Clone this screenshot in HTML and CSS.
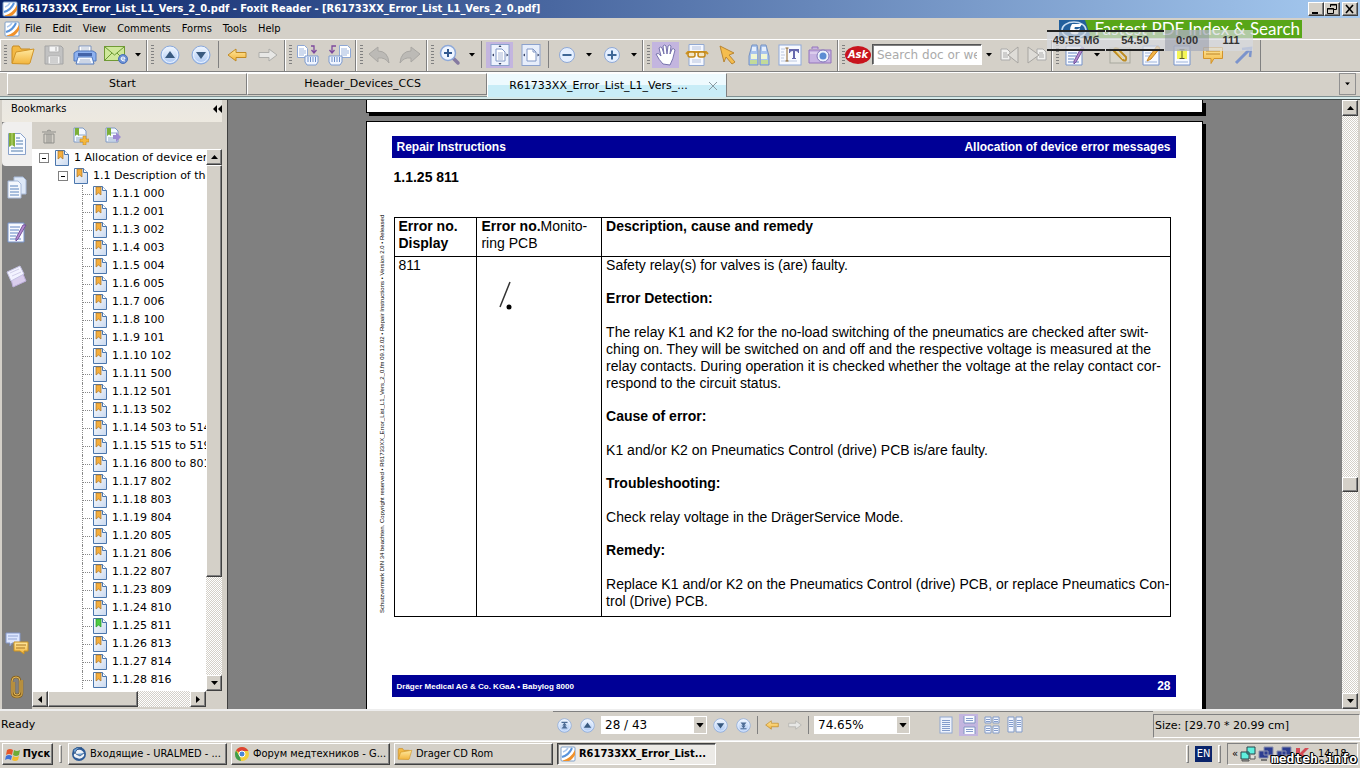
FILE: index.html
```
<!DOCTYPE html>
<html lang="en">
<head>
    <meta charset="UTF-8">
    <meta name="viewport" content="width=device-width, initial-scale=1.0">
    <title>R61733XX_Error_List_L1_Vers_2_0.pdf - Foxit Reader</title>
    <link rel="stylesheet" href="styles.css">
</head>
<body>
    <!-- shared icons -->
    <svg class="sprite" aria-hidden="true">
        <defs>
            <linearGradient id="gBall" x1="0" y1="0" x2="0" y2="1"><stop offset="0" stop-color="#f4f9ff"/><stop offset="1" stop-color="#a9c6f3"/></linearGradient>
            <linearGradient id="gGold" x1="0" y1="0" x2="0" y2="1"><stop offset="0" stop-color="#ffe9a0"/><stop offset="1" stop-color="#f2b43c"/></linearGradient>
            <linearGradient id="gPaper" x1="0" y1="0" x2="1" y2="1"><stop offset="0" stop-color="#ffffff"/><stop offset="1" stop-color="#c9d8ee"/></linearGradient>
        </defs>
        <symbol id="foxit" viewBox="0 0 16 16">
            <rect x="1" y="1" width="14" height="14" rx="1" fill="#fff" stroke="#7f9fc8"/>
            <path d="M3 6Q6 5 8 2" fill="none" stroke="#a9c6ee" stroke-width="1.500"/>
            <path d="M2 11Q9 9 12 2" fill="none" stroke="#5a94dc" stroke-width="2"/>
            <path d="M3 14.500Q11 12 15 4v5Q12 14 9 15H3z" fill="#f0912a"/>
        </symbol>
        <symbol id="caret" viewBox="0 0 6 4"><path d="M0 0h6L3 3.500z"/></symbol>
        <symbol id="folder" viewBox="0 0 26 22">
            <path d="M2 19V4l1-2h6l2 3h9v4" fill="#f3b944" stroke="#c88a20"/>
            <path d="M2 19.500L6 8l18-3-4 14q-.5 1-2 1z" fill="url(#gGold)" stroke="#d09428"/>
        </symbol>
        <symbol id="save" viewBox="0 0 22 22">
            <path d="M2 2h16l2 2v16H2z" fill="#c2c2c2" stroke="#a4a4a4"/>
            <path d="M6 2h10v6H6zM5 12h12v8H5z" fill="#f5f5f5" stroke="#b2b2b2"/>
            <path d="M13 3v4M7 14h8M7 16h8M7 18h8" stroke="#aaa"/>
        </symbol>
        <symbol id="printer" viewBox="0 0 26 22">
            <path d="M7 2h12v8H7z" fill="#fff" stroke="#7d93bd"/><path d="M9 4h8M9 6h8" stroke="#b4bfd2"/>
            <path d="M2 9l3-2h16l3 2v8H2z" fill="#8db1ef" stroke="#5079bd"/>
            <path d="M6 9h14v3H6z" fill="#4263a8"/><path d="M6 13h14l2 7H4z" fill="#f4f8ff" stroke="#5079bd"/>
            <path d="M8 16h10M7 18h12" stroke="#a4b2cc"/>
        </symbol>
        <symbol id="mail" viewBox="0 0 26 22">
            <rect x="1.500" y="2.500" width="20" height="14" fill="#cfe89b" stroke="#709a35"/>
            <path d="M2 3l9.500 8L21 3M2 16l7-7M21 16l-7-7" fill="none" stroke="#6b9933"/>
            <circle cx="20" cy="15" r="4.500" fill="#6b90d5" stroke="#4a70b8"/><path d="M18 15h4q0-2-2-2t-2 2q0 2 4 2" fill="none" stroke="#fff"/>
        </symbol>
        <symbol id="ball" viewBox="0 0 20 20"><circle cx="10" cy="10" r="9" fill="url(#gBall)" stroke="#88a8dc"/><circle cx="10" cy="10" r="7.500" fill="none" stroke="#e9f2ff"/></symbol>
        <symbol id="up" viewBox="0 0 20 20"><use href="#ball"/><path d="M10 6l5 7H5z" fill="#395a80"/></symbol>
        <symbol id="down" viewBox="0 0 20 20"><use href="#ball"/><path d="M10 14l5-7H5z" fill="#395a80"/></symbol>
        <symbol id="first" viewBox="0 0 20 20"><use href="#ball"/><path d="M6 5h8v1.500H6zM10 6l3 4H7zM10 9l4 5H6z" fill="#4d6c96"/></symbol>
        <symbol id="last" viewBox="0 0 20 20"><use href="#ball"/><path d="M6 13.500h8V15H6zM10 14l3-4H7zM10 11l4-5H6z" fill="#4d6c96"/></symbol>
        <symbol id="back" viewBox="0 0 20 16"><path d="M1 8l8-6v3.500h10v5H9V14z" fill="url(#gGold)" stroke="#c08a25"/></symbol>
        <symbol id="forward" viewBox="0 0 20 16"><path d="M19 8l-8-6v3.500H1v5h10V14z" fill="#e7e7e5" stroke="#adadaa"/></symbol>
        <symbol id="printdoc" viewBox="0 0 24 22">
            <path d="M1.500 1.500h7l3 3v9h-10z" fill="#fff" stroke="#8da7d5"/><path d="M3 5h5M3 7h7M3 9h7M3 11h5" stroke="#9db5de"/>
            <path d="M15 2h3v6m-2.500-2L18 9l2.500-3" fill="none" stroke="#7d4a9d" stroke-width="1.300"/>
            <path d="M9 12h13v6l-2 3h-9l-2-3z" fill="#f0f5ff" stroke="#7d9bcf"/><path d="M12 13v5M14.500 13v5M17 13v5M19.500 13v5" stroke="#6f8fc7"/>
        </symbol>
        <symbol id="printsel" viewBox="0 0 24 22">
            <path d="M12.500 1.500h8l3 3v9h-11z" fill="#fff" stroke="#8da7d5"/><path d="M14 5h6M14 7h8M14 9h8M14 11h6" stroke="#9db5de"/>
            <path d="M9 2H5v6M2.500 6L5 9l2.500-3" fill="none" stroke="#7d4a9d" stroke-width="1.300"/>
            <path d="M2 12h13v6l-2 3H4l-2-3z" fill="#f0f5ff" stroke="#7d9bcf"/><path d="M5 13v5M7.500 13v5M10 13v5M12.500 13v5" stroke="#6f8fc7"/>
        </symbol>
        <symbol id="undo" viewBox="0 0 24 20"><path d="M2 9l9-7v4q10 0 11 12-4-6-11-5v4z" fill="#bcbab6" stroke="#a9a7a3"/></symbol>
        <symbol id="redo" viewBox="0 0 24 20"><path d="M22 9l-9-7v4Q3 6 2 18q4-6 11-5v4z" fill="#bcbab6" stroke="#a9a7a3"/></symbol>
        <symbol id="zoom" viewBox="0 0 22 22">
            <path d="M14 14l5 5" stroke="#8579a0" stroke-width="3.500" stroke-linecap="round"/>
            <circle cx="9" cy="9" r="7.500" fill="#eff5ff" stroke="#8ea9d9" stroke-width="1.500"/><path d="M9 5v8M5 9h8" stroke="#31588f" stroke-width="2"/>
        </symbol>
        <symbol id="fitpage" viewBox="0 0 22 24">
            <rect x="2" y="1.500" width="18" height="21" fill="#eef3fd" stroke="#8ca2cd"/>
            <path d="M7 6h6l3 3v9H7z" fill="#fff" stroke="#7f95c4"/><path d="M9 10h5M9 12h5M9 14h5M9 16h5" stroke="#aab8d8"/>
            <path d="M9.500 4l1.500-2 1.500 2zM9.500 20l1.500 2 1.500-2zM5 10.500L3 12l2 1.500zM17.500 10.500l2 1.500-2 1.500z" fill="#333f63"/>
        </symbol>
        <symbol id="fitwidth" viewBox="0 0 22 24">
            <rect x="2" y="1.500" width="18" height="21" fill="#e7eefb" stroke="#8ca2cd"/>
            <path d="M7 6h6l3 3v9H7z" fill="#fff" stroke="#7f95c4"/><path d="M13 6v3h3" fill="none" stroke="#7f95c4"/>
            <path d="M5 10.500L3 12l2 1.500zM17.500 10.500l2 1.500-2 1.500z" fill="#333f63"/>
        </symbol>
        <symbol id="minus" viewBox="0 0 18 18"><circle cx="9" cy="9" r="7.500" fill="#e5efff" stroke="#8fa9d6"/><path d="M4.500 9h9" stroke="#3f6797" stroke-width="2"/></symbol>
        <symbol id="plus" viewBox="0 0 18 18"><circle cx="9" cy="9" r="7.500" fill="#e5efff" stroke="#8fa9d6"/><path d="M4.500 9h9M9 4.500v9" stroke="#3f6797" stroke-width="2"/></symbol>
        <symbol id="hand" viewBox="0 0 22 24">
            <path d="M8 21q-4-4-7-10 2-2 5 2L4 5q2-2 3 0l2 6-1-8q2-2 3 0l1 8 1-8q2-2 3 0l-1 8 2-5q2-1 3 1-2 10-5 15z" fill="#fff" stroke="#7773ad"/>
        </symbol>
        <symbol id="glasses" viewBox="0 0 24 24">
            <path d="M4 1.500h15v21H4z" fill="#f5f8ff" stroke="#92a9d2"/><path d="M7 4h9M7 6h9M7 17h9M7 19h9" stroke="#b7c3de"/>
            <path d="M1 11l2-2h18l2 2" fill="none" stroke="#cf9422" stroke-width="2"/><rect x="3" y="9" width="7" height="5" rx="2" fill="#f3e6c4" stroke="#c48818" stroke-width="1.500"/><rect x="13" y="9" width="7" height="5" rx="2" fill="#f3e6c4" stroke="#c48818" stroke-width="1.500"/>
        </symbol>
        <symbol id="arrow" viewBox="0 0 20 22"><path d="M2 2l14 7-5 2 6 7-3 2-6-7-2 5z" fill="#f5bd4d" stroke="#b98634"/></symbol>
        <symbol id="binoc" viewBox="0 0 24 24">
            <path d="M5 2h5l1 6v14H2V13zM19 2h-5l-1 6v14h9V13z" fill="#a9c4ee" stroke="#7793c2"/>
            <path d="M4 11h6v5H4zM14 11h6v5h-6z" fill="#f0f7d4"/><path d="M3 17h7v4H3zM14 17h7v4h-7z" fill="#c2da99"/><path d="M5 4h4v4H5zM15 4h4v4h-4z" fill="#e6effc"/>
        </symbol>
        <symbol id="textsel" viewBox="0 0 24 22">
            <rect x="1" y="1" width="22" height="20" fill="#f8faff" stroke="#8fa9d9"/>
            <path d="M3 5h4M3 8h3M3 11h4M3 14h3M3 17h16" stroke="#bcc8e0"/><path d="M9 4v13M7.500 4h3M7.500 17h3" stroke="#8d672e"/>
            <path d="M11 5h10v4h-1q0-2-3-2v7h1v1h-4v-1h1V7q-3 0-3 2h-1z" fill="#6567ad"/>
        </symbol>
        <symbol id="camera" viewBox="0 0 26 20">
            <path d="M4 4V2h6v2M1 5h22v13H1z" fill="#c8b4e2" stroke="#9474bc"/><path d="M2 8h20" stroke="#efe6f8"/>
            <circle cx="15" cy="11" r="6" fill="#eef3fc" stroke="#8478b9"/><circle cx="15" cy="11" r="3.500" fill="#5d8dd3"/>
        </symbol>
        <symbol id="prevhit" viewBox="0 0 22 20"><path d="M2 4h6l3 3v8H2z" fill="#f2f2f0" stroke="#aaa"/><path d="M4 8h4M4 10h5M4 12h5" stroke="#aaa"/><path d="M19 2v16L9 10z" fill="#dedcd7" stroke="#a7a5a1"/></symbol>
        <symbol id="nexthit" viewBox="0 0 22 20"><path d="M11 4h6l3 3v8h-9z" fill="#f2f2f0" stroke="#aaa"/><path d="M13 8h4M13 10h5M13 12h5" stroke="#aaa"/><path d="M2 2v16l11-8z" fill="#dedcd7" stroke="#a7a5a1"/></symbol>
        <symbol id="notepen" viewBox="0 0 22 24">
            <path d="M2 3h16v19H2z" fill="#f8faff" stroke="#7793ca"/><path d="M4 7h10M4 10h9M4 13h8M4 16h6M4 19h11" stroke="#94acd8" stroke-width="1.500"/>
            <path d="M20 5l-8 14-2 2v-3l7-13z" fill="#b38bd0" stroke="#76539c"/>
        </symbol>
        <symbol id="link" viewBox="0 0 22 20"><rect x="1" y="3" width="20" height="15" fill="#d8d5cb" stroke="#a7a79d"/><path d="M5 5l9 10q4 2 3-3L9 4Q5 2 5 6l8 8" fill="none" stroke="#bd8c22" stroke-width="2"/><path d="M6 5l8 9" stroke="#ffe58a"/></symbol>
        <symbol id="pencil" viewBox="0 0 22 24"><path d="M3 3h16v19H3z" fill="#f8faff" stroke="#7793ca"/><path d="M5 7h8M5 10h6M5 13h5M5 19h12" stroke="#9db3db"/><path d="M20 5l-9 11-4 2 2-4 8-11z" fill="#f4b547" stroke="#c28226"/></symbol>
        <symbol id="highlight" viewBox="0 0 22 24"><path d="M3 3h16v19H3z" fill="#f8faff" stroke="#7793ca"/><path d="M6 6h10v10H6z" fill="#f4f557"/><path d="M5 19h12" stroke="#9db3db"/><path d="M11 6v10M8.500 6.500h5M8.500 15.500h5" stroke="#5a5d2b"/></symbol>
        <symbol id="comment" viewBox="0 0 22 20"><path d="M1.500 2.500h19v11H12l-3 5v-5H1.500z" fill="url(#gGold)" stroke="#d2932b"/><path d="M4 6h14M4 9h14" stroke="#bc8429"/></symbol>
        <symbol id="draw" viewBox="0 0 22 22"><path d="M3 19L16 6" stroke="#7c94cc" stroke-width="3"/><path d="M9 5l9-1-1 9" fill="none" stroke="#7c94cc" stroke-width="2.500"/></symbol>
        <symbol id="trash" viewBox="0 0 16 16"><path d="M1 4h14M6 3q2-2 4 0M3 6h10v9H3zM6 6v9M8 6v9M10 6v9" fill="none" stroke="#8f8f8b"/></symbol>
        <symbol id="bmadd" viewBox="0 0 16 18"><path d="M1 1h9l3 3v11H1z" fill="#f4f8ff" stroke="#7e9ac5"/><path d="M6 8h6M3 11h8M3 13h8" stroke="#91abc9"/><path d="M2 1h4v8L4 7.500 2 9z" fill="#7caf39"/><path d="M10 9h3v3h3v3h-3v3h-3v-3H7v-3h3z" fill="#f4b83e" stroke="#c18319" stroke-width=".5"/></symbol>
        <symbol id="bmgo" viewBox="0 0 16 18"><path d="M1 1h9l3 3v11H1z" fill="#f4f8ff" stroke="#7e9ac5"/><path d="M6 6h5M3 11h8M3 13h8" stroke="#91abc9"/><path d="M2 1h4v8L4 7.500 2 9z" fill="#7caf39"/><path d="M8 8h3V5l5 5-5 5v-3H8z" fill="#9d8ad3"/></symbol>
        <symbol id="panebm" viewBox="0 0 20 24"><path d="M1.500 1.500h12l5 5v16h-17z" fill="#f7faff" stroke="#88a1ca"/><path d="M9 6h4M9 9h7M9 12h7M4 16h12M4 19h12" stroke="#89a7c9" stroke-width="1.500"/><path d="M2 1h6v14l-3-2-3 2z" fill="#83ad35"/><path d="M5 1v12" stroke="#bcdb78"/></symbol>
        <symbol id="pages" viewBox="0 0 20 24"><path d="M7 1h9l3 3v14H7z" fill="#dde8f8" stroke="#a8bad9"/><path d="M1 5h10l3 3v14H1z" fill="#f5f8fd" stroke="#a8bad9"/><path d="M3 10h8M3 13h9M3 16h9M3 19h9" stroke="#8faad2" stroke-width="1.500"/></symbol>
        <symbol id="layers" viewBox="0 0 22 24"><path d="M5 15l12-5 3 7-13 6z" fill="#d9cdec" stroke="#bdaedb"/><path d="M1 8l13-6 4 8-13 7z" fill="#f3f3ff" stroke="#c4c1e2"/><path d="M4 9l9-4M6 12l9-4" stroke="#d3d0ea"/></symbol>
        <symbol id="chat" viewBox="0 0 24 24"><path d="M1 2h14v10H7l-2 3v-3H1z" fill="#dce6ff" stroke="#8497c9"/><path d="M3 5h10M3 8h9" stroke="#93a5d4"/><path d="M9 11h14v9h-4v3l-4-3H9z" fill="url(#gGold)" stroke="#c99121"/><path d="M11 14h10M11 17h9" stroke="#aa7927"/></symbol>
        <symbol id="clip" viewBox="0 0 14 24"><path d="M4 7v10q0 3 3 3t3-3V6q0-4-4-4T2 6v12q0 4 5 4t5-4V5" fill="none" stroke="#8a6420" stroke-width="2.500"/><path d="M4 7v10q0 3 3 3t3-3V6q0-4-4-4T2 6v12q0 4 5 4t5-4V5" fill="none" stroke="#e2b95c"/></symbol>
        <symbol id="bm" viewBox="0 0 14 16"><path d="M.5.500h9l4 4v11H.5z" fill="url(#gPaper)" stroke="#4a76ad"/><path d="M9.500.500v4h4" fill="#fff" stroke="#4a76ad"/><path d="M3 1h5v8L5.500 7 3 9z" fill="#f5ae3d" stroke="#a8742a" stroke-width=".7"/></symbol>
        <symbol id="bmcur" viewBox="0 0 14 16"><path d="M.5.500h9l4 4v11H.5z" fill="url(#gPaper)" stroke="#4a76ad"/><path d="M9.500.500v4h4" fill="#fff" stroke="#4a76ad"/><path d="M3 1h5v8L5.500 7 3 9z" fill="#4ecb43" stroke="#27962b" stroke-width=".7"/></symbol>
        <symbol id="one" viewBox="0 0 16 18"><rect x="2" y="1" width="12" height="16" fill="#eef3fd" stroke="#92a8d0"/><path d="M4 4.500h8M4 6.500h8M4 8.500h8M4 10.500h8M4 12.500h8M4 14.500h8" stroke="#839ccb"/></symbol>
        <symbol id="cont" viewBox="0 0 16 18"><path d="M3 0v7h11V0M3 18v-7h11v7" fill="#f8faff" stroke="#8295c2"/><path d="M5 2.500h7M5 4.500h7M5 13.500h7M5 15.500h7" stroke="#839ccb"/></symbol>
        <symbol id="contface" viewBox="0 0 16 18"><path d="M1 1h6v6H1zM9 1h6v6H9zM1 10h6v7H1zM9 10h6v7H9z" fill="#f4f7ff" stroke="#829bc8"/><path d="M2 3.500h4M2 5.500h4M10 3.500h4M10 5.500h4M2 12.500h4M2 14.500h4M10 12.500h4M10 14.500h4" stroke="#839ccb"/></symbol>
        <symbol id="face" viewBox="0 0 16 18"><path d="M1 1h6v15H1zM9 1h6v15H9z" fill="#f4f7ff" stroke="#829bc8"/><path d="M2 4.500h4M2 6.500h4M2 8.500h4M2 10.500h4M10 4.500h4M10 6.500h4M10 8.500h4M10 10.500h4" stroke="#839ccb"/></symbol>
        <symbol id="pcs" viewBox="0 0 16 16"><path d="M7 1h8v7H7zM1 6h8v7H1z" fill="#5ff0df" stroke="#29454a"/><path d="M10 9v4h5v-3M2 14h7v1H2z" fill="#e2e2df" stroke="#555"/></symbol>
        <symbol id="net" viewBox="0 0 16 16"><path d="M6 1h9v8H6zM1 5h9v7H1z" fill="#2c3d91" stroke="#8b91ac"/><path d="M3 14h6" stroke="#777" stroke-width="2"/></symbol>
    </svg>

    <header class="titlebar">
        <svg width="16" height="16"><use href="#foxit"/></svg>
        <h1>R61733XX_Error_List_L1_Vers_2_0.pdf - Foxit Reader - [R61733XX_Error_List_L1_Vers_2_0.pdf]</h1>
        <div class="window-buttons">
            <button class="bevel" aria-label="Minimize"><svg width="10" height="10"><path d="M1 8h6v2H1z"/></svg></button>
            <button class="bevel" aria-label="Restore"><svg width="10" height="10"><path d="M3.500 3V.5h6v5H7M3 1h7M.5 4.500h6v5h-6zM0 5h7" fill="none" stroke="#000"/></svg></button>
            <button class="bevel close" aria-label="Close"><svg width="10" height="10"><path d="M1 1l7 8M8 1L1 9" stroke="#000" stroke-width="1.600"/></svg></button>
        </div>
    </header>

    <nav class="menubar">
        <svg width="16" height="16"><use href="#foxit"/></svg>
        <button>File</button>
        <button>Edit</button>
        <button>View</button>
        <button>Comments</button>
        <button>Forms</button>
        <button>Tools</button>
        <button>Help</button>
        <a class="banner" href="#">
            <svg width="32" height="18" viewBox="0 0 32 18"><path d="M0 0h26l6 18H0z" fill="#225f9c"/><ellipse cx="15" cy="10" rx="12" ry="8" fill="none" stroke="#c8ddf2" stroke-width="1.500"/><path d="M13 4h10l-2 3h-5q-2 3 3 2l2-1-2 6q-8 2-8-4 0-3 2-6z" fill="#fff"/></svg>
            <span>Fastest PDF Index &amp; Search</span>
        </a>
        <div class="monitor">
            <span class="lined">49.55 Мб</span><span class="lined">54.50</span><span class="time">0:00</span><span class="count">111</span>
        </div>
    </nav>

    <div class="toolbar">
        <div class="group">
            <button aria-label="Open"><svg width="26" height="22"><use href="#folder"/></svg></button>
            <button aria-label="Save"><svg width="22" height="22"><use href="#save"/></svg></button>
            <button aria-label="Print"><svg width="26" height="22"><use href="#printer"/></svg></button>
            <button aria-label="Email"><svg width="26" height="22"><use href="#mail"/></svg></button>
            <button class="drop" aria-label="Email options"><svg width="6" height="4"><use href="#caret"/></svg></button>
        </div>
        <div class="group">
            <button aria-label="Previous page"><svg width="20" height="20"><use href="#up"/></svg></button>
            <button aria-label="Next page"><svg width="20" height="20"><use href="#down"/></svg></button>
            <i class="sep"></i>
            <button aria-label="Previous view"><svg width="20" height="16"><use href="#back"/></svg></button>
            <button aria-label="Next view"><svg width="20" height="16"><use href="#forward"/></svg></button>
        </div>
        <div class="group">
            <button aria-label="Print document"><svg width="24" height="22"><use href="#printdoc"/></svg></button>
            <button aria-label="Print page"><svg width="24" height="22"><use href="#printsel"/></svg></button>
        </div>
        <div class="group">
            <button aria-label="Undo"><svg width="24" height="20"><use href="#undo"/></svg></button>
            <button aria-label="Redo"><svg width="24" height="20"><use href="#redo"/></svg></button>
        </div>
        <div class="group">
            <button aria-label="Zoom"><svg width="22" height="22"><use href="#zoom"/></svg></button>
            <button class="drop" aria-label="Zoom options"><svg width="6" height="4"><use href="#caret"/></svg></button>
            <i class="sep"></i>
            <button class="pressed" aria-label="Fit page"><svg width="22" height="24"><use href="#fitpage"/></svg></button>
            <button aria-label="Fit width"><svg width="22" height="24"><use href="#fitwidth"/></svg></button>
            <i class="sep"></i>
            <button aria-label="Zoom out"><svg width="18" height="18"><use href="#minus"/></svg></button>
            <button class="drop" aria-label="Zoom out options"><svg width="6" height="4"><use href="#caret"/></svg></button>
            <button aria-label="Zoom in"><svg width="18" height="18"><use href="#plus"/></svg></button>
            <button class="drop" aria-label="Zoom in options"><svg width="6" height="4"><use href="#caret"/></svg></button>
        </div>
        <div class="group">
            <button class="pressed" aria-label="Hand"><svg width="22" height="24"><use href="#hand"/></svg></button>
            <button aria-label="Reading mode"><svg width="24" height="24"><use href="#glasses"/></svg></button>
            <button aria-label="Select annotation"><svg width="20" height="22"><use href="#arrow"/></svg></button>
            <button aria-label="Find"><svg width="24" height="24"><use href="#binoc"/></svg></button>
            <button aria-label="Select text"><svg width="24" height="22"><use href="#textsel"/></svg></button>
            <button aria-label="Snapshot"><svg width="26" height="20"><use href="#camera"/></svg></button>
        </div>
        <div class="group search">
            <span class="ask">Ask</span>
            <input type="text" aria-label="Search document or web" placeholder="Search doc or web">
            <button class="drop" aria-label="Search options"><svg width="6" height="4"><use href="#caret"/></svg></button>
            <button class="small" aria-label="Previous hit"><svg width="22" height="20"><use href="#prevhit"/></svg></button>
            <button class="small" aria-label="Next hit"><svg width="22" height="20"><use href="#nexthit"/></svg></button>
        </div>
        <div class="group">
            <button aria-label="Note"><svg width="22" height="24"><use href="#notepen"/></svg></button>
            <button class="drop" aria-label="Note options"><svg width="6" height="4"><use href="#caret"/></svg></button>
            <button aria-label="Link"><svg width="22" height="20"><use href="#link"/></svg></button>
            <button aria-label="Pencil"><svg width="22" height="24"><use href="#pencil"/></svg></button>
            <button aria-label="Highlight"><svg width="22" height="24"><use href="#highlight"/></svg></button>
            <button aria-label="Comment"><svg width="22" height="20"><use href="#comment"/></svg></button>
            <button aria-label="Arrow"><svg width="22" height="22"><use href="#draw"/></svg></button>
        </div>
    </div>

    <div class="tabs">
        <button class="tab">Start</button>
        <button class="tab">Header_Devices_CCS</button>
        <button class="tab active"><span>R61733XX_Error_List_L1_Vers_...</span><svg width="8" height="8"><path d="M0 0l8 8M8 0L0 8" stroke="#8a9ba3"/></svg></button>
        <button class="tab-list" aria-label="List tabs"><svg width="5" height="4" viewBox="0 0 6 4"><use href="#caret"/></svg></button>
    </div>

    <main>
        <aside>
            <div class="pane-title">
                <h2>Bookmarks</h2>
                <button aria-label="Collapse"><svg width="9" height="8"><path d="M4 0v8L0 4zM9 0v8L5 4z"/></svg></button>
            </div>
            <div class="pane">
                <div class="pane-tabs">
                    <button class="current" aria-label="Bookmarks"><svg width="20" height="24"><use href="#panebm"/></svg></button>
                    <button aria-label="Pages"><svg width="20" height="24"><use href="#pages"/></svg></button>
                    <button aria-label="Annotations"><svg width="22" height="24"><use href="#notepen"/></svg></button>
                    <button aria-label="Layers"><svg width="22" height="24"><use href="#layers"/></svg></button>
                    <button class="bottom" aria-label="Comments"><svg width="24" height="24"><use href="#chat"/></svg></button>
                    <button aria-label="Attachments"><svg width="14" height="24"><use href="#clip"/></svg></button>
                </div>
                <div class="pane-body">
                    <div class="pane-tools">
                        <button aria-label="Delete"><svg width="16" height="16"><use href="#trash"/></svg></button>
                        <button aria-label="Add bookmark"><svg width="16" height="18"><use href="#bmadd"/></svg></button>
                        <button aria-label="Go to bookmark"><svg width="16" height="18"><use href="#bmgo"/></svg></button>
                    </div>
                    <div class="tree-row">
                        <div class="tree-column">
                            <div class="tree">
                                <div class="node"><span class="box"></span><svg width="14" height="16"><use href="#bm"/></svg><a href="#">1 Allocation of device error messages</a></div>
                                <div class="branch">
                                    <div class="node"><span class="box"></span><svg width="14" height="16"><use href="#bm"/></svg><a href="#">1.1 Description of the error</a></div>
                                    <ul id="leaves"></ul>
                                </div>
                            </div>
                            <div class="scroll horizontal">
                                <button class="bevel" aria-label="Scroll left"><svg width="4" height="7"><path d="M4 0v7L0 3.500z"/></svg></button>
                                <div class="thumb bevel"></div>
                                <button class="bevel end" aria-label="Scroll right"><svg width="4" height="7"><path d="M0 0v7l4-3.500z"/></svg></button>
                            </div>
                        </div>
                        <div class="scroll vertical">
                            <button class="bevel" aria-label="Scroll up"><svg width="7" height="4"><path d="M0 4h7L3.500 0z"/></svg></button>
                            <div class="thumb bevel"></div>
                            <button class="bevel end" aria-label="Scroll down"><svg width="7" height="4"><path d="M0 0h7L3.500 4z"/></svg></button>
                        </div>
                    </div>
                </div>
            </div>
        </aside>

        <section class="canvas">
            <div class="sheet previous"></div>
            <article class="sheet">
                <div class="bar"><span>Repair Instructions</span><span>Allocation of device error messages</span></div>
                <h3>1.1.25 811</h3>
                <div class="sheet-body">
                    <p class="margin-note">Schutzvermerk DIN 34 beachten. Copyright reserved • R61733XX_Error_List_L1_Vers_2_0.fm 09.12.02 • Repair Instructions • Version 2.0 • Released</p>
                    <table>
                        <thead>
                            <tr>
                                <th class="display">Error no.<br>Display</th>
                                <th class="monitoring">Error no.<span>Monito-<br>ring PCB</span></th>
                                <th>Description, cause and remedy</th>
                            </tr>
                        </thead>
                        <tbody>
                            <tr>
                                <td>811</td>
                                <td><svg class="mark" width="16" height="30"><path d="M1 26L11 1" stroke="#333" stroke-width="1.500"/><circle cx="10" cy="26" r="2.500"/></svg></td>
                                <td>
                                    <p>Safety relay(s) for valves is (are) faulty.</p>
                                    <h4>Error Detection:</h4>
                                    <p>The relay K1 and K2 for the no-load switching of the pneumatics are checked after swit-<br>ching on. They will be switched on and off and the respective voltage is measured at the<br>relay contacts. During operation it is checked whether the voltage at the relay contact cor-<br>respond to the circuit status.</p>
                                    <h4>Cause of error:</h4>
                                    <p>K1 and/or K2 on Pneumatics Control (drive) PCB is/are faulty.</p>
                                    <h4>Troubleshooting:</h4>
                                    <p>Check relay voltage in the DrägerService Mode.</p>
                                    <h4>Remedy:</h4>
                                    <p>Replace K1 and/or K2 on the Pneumatics Control (drive) PCB, or replace Pneumatics Con-<br>trol (Drive) PCB.</p>
                                </td>
                            </tr>
                        </tbody>
                    </table>
                </div>
                <div class="bar foot"><span class="maker">Dräger Medical AG &amp; Co. KGaA • Babylog 8000</span><span>28</span></div>
            </article>
        </section>

        <div class="scroll vertical document-scroll">
            <button class="bevel" aria-label="Scroll up"><svg width="7" height="4"><path d="M0 4h7L3.500 0z"/></svg></button>
            <div class="thumb bevel"></div>
            <button class="bevel end" aria-label="Scroll down"><svg width="7" height="4"><path d="M0 0h7L3.500 4z"/></svg></button>
        </div>
    </main>

    <div class="status">
        <span class="ready">Ready</span>
        <div class="status-nav">
            <button aria-label="First page"><svg width="15" height="15"><use href="#first"/></svg></button>
            <button aria-label="Previous page"><svg width="15" height="15"><use href="#up"/></svg></button>
            <div class="combo page-combo"><select aria-label="Page"><option>28 / 43</option></select><span><svg width="8" height="5" viewBox="0 0 6 4"><use href="#caret"/></svg></span></div>
            <button aria-label="Next page"><svg width="15" height="15"><use href="#down"/></svg></button>
            <button aria-label="Last page"><svg width="15" height="15"><use href="#last"/></svg></button>
            <i class="sep"></i>
            <button aria-label="Back"><svg width="14" height="12"><use href="#back"/></svg></button>
            <button aria-label="Forward"><svg width="14" height="12"><use href="#forward"/></svg></button>
            <i class="sep"></i>
            <div class="combo zoom-combo"><select aria-label="Zoom"><option>74.65%</option></select><span><svg width="8" height="5" viewBox="0 0 6 4"><use href="#caret"/></svg></span></div>
            <button class="views" aria-label="Single page"><svg width="16" height="18"><use href="#one"/></svg></button>
            <button class="pressed" aria-label="Continuous"><svg width="16" height="18"><use href="#cont"/></svg></button>
            <button aria-label="Continuous facing"><svg width="16" height="18"><use href="#contface"/></svg></button>
            <button aria-label="Facing"><svg width="16" height="18"><use href="#face"/></svg></button>
        </div>
        <span class="size">Size: [29.70 * 20.99 cm]</span>
    </div>

    <footer class="taskbar">
        <button class="bevel start"><svg width="16" height="16"><path d="M2 4q3-2 6 0L7 9Q4 7 1 9z" fill="#e5582b"/><path d="M9 4q3 2 6 0l-1 5q-3 2-6 0z" fill="#6fac35"/><path d="M1 10q3-2 6 0l-1 4q-3-2-6 0z" fill="#3f72d8"/><path d="M8 10q3 2 6 0l-1 4q-3 2-6 0z" fill="#f3bb2b"/></svg>Пуск</button>
        <i class="handle"></i>
        <button class="bevel task"><svg width="16" height="16"><circle cx="8" cy="8" r="7" fill="#2f5c97"/><path d="M3 8q1-5 7-4 4 2 3 6-3 4-7 2-4-1-3-4z" fill="#eef2f7"/><path d="M2 4q4-4 9-2-6 0-7 6zM5 8l4 2 4-3" fill="#6ea1d6" stroke="#244675" stroke-width=".7"/></svg><span>Входящие - URALMED - ...</span></button>
        <button class="bevel task"><svg width="16" height="16"><circle cx="8" cy="8" r="7" fill="#f4cf3b"/><path d="M8 8L2 4.500Q4 1 8 1t6.500 4H8z" fill="#dc4436"/><path d="M2 4.500L6 11l1 4Q1 14 1 8q0-2 1-3.500z" fill="#3f9d4c"/><circle cx="8" cy="8" r="3" fill="#4c86d8" stroke="#fff"/></svg><span>Форум медтехников - G...</span></button>
        <button class="bevel task"><svg width="16" height="16" viewBox="0 0 26 22"><use href="#folder"/></svg><span>Drager CD Rom</span></button>
        <button class="bevel task running"><svg width="16" height="16"><use href="#foxit"/></svg><span>R61733XX_Error_List...</span></button>
        <i class="handle tray-handle"></i>
        <span class="lang">EN</span>
        <i class="handle"></i>
        <div class="tray">
            <span>«</span>
            <svg width="16" height="16"><use href="#pcs"/></svg>
            <svg width="16" height="16"><use href="#net"/></svg>
            <svg width="16" height="16"><use href="#net"/></svg>
            <svg width="16" height="16"><path d="M2 2h4v5l5-5h4L9 8l6 6h-5L6 9v5H2z" fill="#d44b55"/></svg>
            <time>14:18</time>
            <strong class="site">medteh.info</strong>
        </div>
    </footer>

    <script>
        // bookmark labels, in section order
        const codes = ['000', '001', '002', '003', '004', '005', '006', '100', '101', '102', '500', '501', '502',
            '503 to 514', '515 to 519', '800 to 801', '802', '803', '804', '805', '806', '807', '809', '810',
            '811', '813', '814', '816'];
        const list = document.getElementById('leaves');

        codes.forEach(function(code, i) {
            const icon = code === '811' ? 'bmcur' : 'bm';
            list.innerHTML += '<li class="node"><svg width="14" height="16"><use href="#' + icon + '"/></svg>' +
                '<a href="#">1.1.' + (i + 1) + ' ' + code + '</a></li>';
        });
    </script>
</body>
</html>
```

FILE: styles.css
```
* {
    box-sizing: border-box;
}

body {
    margin: 0;
    height: 100vh;
    display: flex;
    flex-direction: column;
    overflow: hidden;
    background: #d4d0c8;
    color: #000;
    font: 11px/16px "DejaVu Sans", Verdana, sans-serif;
}

h1, h2, h3, h4, p, ul {
    margin: 0;
    padding: 0;
    font-size: inherit;
}

button {
    display: flex;
    align-items: center;
    justify-content: center;
    flex: none;
    padding: 0;
    border: 0;
    background: none;
    color: inherit;
    font: inherit;
}

svg {
    flex: none;
}

a {
    color: inherit;
    text-decoration: none;
}

.sprite {
    position: absolute;
    width: 0;
    height: 0;
}

.bevel {
    background: #d4d0c8;
    border: 1px solid;
    border-color: #fff #404040 #404040 #fff;
    box-shadow: inset -1px -1px #808080;
}

/* title and menu */
.titlebar, .menubar, .pane-title, .taskbar {
    font-family: "DejaVu Sans Condensed", Tahoma, sans-serif;
}

.titlebar {
    display: flex;
    align-items: center;
    flex: none;
    height: 18px;
    padding: 0 2px;
    gap: 2px;
    color: #fff;
    background: linear-gradient(90deg, #0a246a, #a6caf0);
}

.titlebar h1 {
    flex: 1;
    font-weight: bold;
    white-space: nowrap;
}

.window-buttons {
    display: flex;
}

.window-buttons button {
    width: 16px;
    height: 14px;
}

.window-buttons .close {
    margin-left: 2px;
}

.menubar {
    position: relative;
    display: flex;
    align-items: center;
    flex: none;
    height: 21px;
    padding-left: 4px;
}

.menubar button {
    margin-left: 5px;
    padding-right: 6px;
}

.banner {
    display: flex;
    height: 18px;
    margin-left: auto;
    margin-right: 58px;
    padding-right: 2px;
    gap: 3px;
    overflow: hidden;
    background: #58a618;
    color: #fff;
    font: 17px/18px Lato, sans-serif;
}

/* load monitor floating over the menu and toolbar */
.monitor {
    position: absolute;
    z-index: 2;
    right: 107px;
    top: 12px;
    display: flex;
    height: 21px;
    background: rgba(215, 218, 224, 0.7);
    color: #333;
    font: bold 11px/21px "Liberation Sans", Arial, sans-serif;
    text-align: center;
}

.monitor span {
    width: 44px;
}

.monitor .lined {
    width: 58px;
    margin-right: 1px;
    border-top: 2px solid #222;
    border-bottom: 2px solid #222;
    line-height: 17px;
}

.monitor .time {
    background: rgba(125, 130, 150, 0.4);
}

/* toolbar */
.toolbar {
    display: flex;
    flex: none;
    height: 33px;
    border-top: 1px solid #fff;
    border-bottom: 1px solid #808080;
}

.group {
    display: flex;
    align-items: center;
    padding: 0 1px 2px 0;
    border-left: 1px solid #fff;
    border-right: 1px solid #808080;
}

.group::before {
    content: "";
    width: 3px;
    height: 20px;
    margin-left: 3px;
    background: repeating-linear-gradient(#808080 0 1px, transparent 1px 3px);
}

.group button {
    width: 31px;
    height: 26px;
}

.group .drop {
    width: 14px;
}

.group .small {
    width: 27px;
}

.pressed {
    background: #c3b5df;
    background-clip: content-box;
}

.group .pressed {
    padding: 0 2px;
}

.sep {
    width: 1px;
    height: 27px;
    margin: 0 2px;
    background: #808080;
}

.ask {
    width: 26px;
    height: 18px;
    margin-right: 1px;
    border-radius: 50%;
    background: #c8141d;
    color: #fff;
    font: italic bold 11px/18px "DejaVu Sans Condensed", sans-serif;
    text-align: center;
}

.search input {
    width: 110px;
    height: 21px;
    padding: 0 4px;
    border: 1px solid;
    border-color: #555 #fff #fff #555;
    box-shadow: inset 1px 1px #808080;
    font: 12px "DejaVu Sans", Verdana, sans-serif;
}

.search input::placeholder {
    color: #aaa;
}

/* tabs */
.tabs {
    display: flex;
    flex: none;
    height: 28px;
    padding: 0 4px 4px 7px;
    border-top: 1px solid #fff;
    border-bottom: 1px solid #404848;
    background: linear-gradient(#d4d0c8 23px, #7f9092 23px, #7f9092 24px, #d5e9e9 24px);
}

.tab {
    width: 240px;
    padding-right: 9px;
    border: 1px solid;
    border-color: #fff #808080 #808080 #fff;
}

.tab.active {
    margin-bottom: -2px;
    border-bottom: 0;
    background: linear-gradient(#eefafe 50%, #c9edf7 50%);
}

.tab.active span {
    flex: 1;
}

.tab-list {
    width: 17px;
    margin-left: auto;
    border: 1px solid #909090;
}

/* bookmark pane */
main {
    display: flex;
    flex: 1;
    min-height: 0;
    border-bottom: 2px solid #eee;
}

aside {
    display: flex;
    flex-direction: column;
    width: 228px;
    flex: none;
    padding-right: 5px;
    border-left: 2px solid #d4d0c8;
    border-right: 1px solid #404040;
}

.pane-title {
    display: flex;
    align-items: center;
    justify-content: space-between;
    height: 22px;
    padding: 0 0 4px 9px;
    background: linear-gradient(#e9e7e2, #ede9e0);
}

.pane-title h2 {
    font-weight: normal;
}

.pane {
    display: flex;
    flex: 1;
    min-height: 0;
}

.pane-tabs {
    display: flex;
    flex-direction: column;
    width: 30px;
    background: #808080;
}

.pane-tabs button {
    height: 44px;
}

.pane-tabs .current {
    background: #f0efee;
    border-radius: 4px 0 0 4px;
}

.pane-tabs .bottom {
    margin-top: auto;
}

.pane-body {
    display: flex;
    flex-direction: column;
    flex: 1;
    min-width: 0;
    padding-bottom: 2px;
}

.pane-tools {
    display: flex;
    align-items: center;
    gap: 16px;
    height: 27px;
    padding-left: 9px;
}

.tree-row {
    display: flex;
    flex: 1;
    min-height: 0;
}

.tree-column {
    display: flex;
    flex-direction: column;
    flex: 1;
    min-width: 0;
}

.tree {
    flex: 1;
    min-height: 0;
    padding-left: 7px;
    overflow: hidden;
    background: #fff;
}

.branch, .branch ul {
    padding-left: 19px;
}

.node {
    display: flex;
    align-items: center;
    height: 18px;
    gap: 5px;
    white-space: nowrap;
}

.box {
    flex: none;
    width: 10px;
    height: 10px;
    margin-right: 1px;
    border: 1px solid #808080;
    background: linear-gradient(#000, #000) center / 4px 1px no-repeat;
}

li.node::before {
    content: "";
    flex: none;
    align-self: stretch;
    width: 10px;
    margin: 0 -5px 0 5px;
    border-left: 1px dotted #888;
    background: repeating-linear-gradient(90deg, #888 0 1px, transparent 1px 2px) center / 100% 1px no-repeat;
}

/* scroll bars */
.scroll {
    display: flex;
    flex: none;
    background: repeating-conic-gradient(#fff 0 25%, #d4d0c8 0 50%) 0 0 / 2px 2px;
}

.scroll button {
    width: 16px;
    height: 16px;
}

.scroll.vertical {
    flex-direction: column;
    width: 16px;
}

.vertical .end {
    margin-top: auto;
}

.horizontal .end {
    margin-left: auto;
}

.tree-row .vertical {
    margin-bottom: 16px;
}

.vertical .thumb {
    height: 76%;
}

.horizontal .thumb {
    width: 52%;
}

.document-scroll .thumb {
    height: 15px;
    margin-top: 361px;
}

.document-scroll {
    margin-right: 2px;
}

/* document */
.canvas {
    flex: 1;
    min-width: 0;
    padding-right: 2px;
    overflow: hidden;
    background: #808080;
}

.sheet {
    max-width: 837px;
    height: 620px;
    margin: 0 auto;
    padding: 14px 26px 0 25px;
    border: 1px solid #000;
    background: #fff;
    box-shadow: 3px 3px #000;
    font: 14px/17px "Liberation Sans", Arial, sans-serif;
}

.sheet.previous {
    height: 13px;
    margin-bottom: 8px;
    padding: 0;
    border-top: 0;
}

.bar {
    display: flex;
    align-items: center;
    justify-content: space-between;
    height: 22px;
    padding: 0 5px;
    background: #000096;
    color: #fff;
    font-size: 12px;
    font-weight: bold;
}

.sheet h3 {
    margin: 11px 0 31px 2px;
}

.sheet-body {
    display: flex;
    margin-left: -16px;
    padding-right: 5px;
}

.margin-note {
    width: 18px;
    height: 396px;
    writing-mode: vertical-rl;
    transform: rotate(180deg);
    font-size: 6px;
    line-height: 12px;
    white-space: nowrap;
}

table {
    flex: 1;
    border-collapse: collapse;
    table-layout: fixed;
    white-space: nowrap;
}

th, td {
    padding: 0 4px 4px;
    border: 1px solid #000;
    text-align: left;
    vertical-align: top;
}

td {
    padding: 0 0 6px 4px;
}

th span {
    font-weight: normal;
}

.display {
    width: 85px;
}

.monitoring {
    width: 126px;
}

td h4 {
    margin: 16px 0 17px;
}

.mark {
    margin: 24px 0 0 18px;
}

.bar.foot {
    margin-top: 58px;
}

.maker {
    font-size: 8px;
}

/* status bar */
.status {
    display: flex;
    flex: none;
    height: 30px;
    border-bottom: 1px solid #eee;
}

.ready {
    width: 553px;
    padding: 6px 1px;
}

.status-nav {
    display: flex;
    align-items: center;
    flex: 1;
    padding-bottom: 2px;
    border-top: 1px solid #808080;
}

.status-nav button {
    width: 23px;
    height: 22px;
}

.status-nav .pressed {
    padding: 0 2px;
}

.status-nav .sep {
    height: 18px;
}

.status-nav .views {
    margin-left: 24px;
}

.combo {
    display: flex;
    height: 18px;
    padding: 1px;
    background: #fff;
}

.page-combo {
    width: 106px;
    margin: 0 2px;
}

.zoom-combo {
    width: 96px;
    margin-left: 3px;
}

.combo select {
    appearance: none;
    flex: 1;
    min-width: 0;
    padding: 0 3px;
    border: 0;
    background: #fff;
    color: #000;
    font: 12px/16px "DejaVu Sans", Verdana, sans-serif;
}

.combo span {
    display: flex;
    align-items: center;
    justify-content: center;
    width: 12px;
    background: #d4d0c8;
}

.size {
    width: 207px;
    margin: 3px 0 2px;
    padding: 3px 1px;
    border: 1px solid;
    border-color: #808080 #fff #fff #808080;
}

/* task bar */
.taskbar {
    display: flex;
    flex: none;
    height: 27px;
    padding: 1px 2px 3px;
    gap: 4px;
    border-top: 1px solid #fff;
}

.start {
    width: 51px;
    gap: 2px;
    font-weight: bold;
}

.handle {
    width: 3px;
    margin: 2px 2px;
    border: 1px solid;
    border-color: #fff #808080 #808080 #fff;
}

.task {
    width: 159px;
    padding-left: 2px;
    gap: 3px;
    justify-content: flex-start;
    white-space: nowrap;
}

.running {
    background: #eceae6;
    border-color: #404040 #fff #fff #404040;
    box-shadow: inset 1px 1px #808080;
    font-weight: bold;
}

.tray-handle {
    margin-left: auto;
}

.lang {
    width: 17px;
    margin: 3px 0;
    background: #0a246a;
    color: #fff;
    text-align: center;
}

.tray {
    position: relative;
    display: flex;
    align-items: center;
    width: 131px;
    padding-left: 4px;
    gap: 2px;
    border: 1px solid;
    border-color: #808080 #fff #fff #808080;
}

.tray time {
    margin-left: 6px;
}

/* site mark laid over the tray */
.site {
    position: absolute;
    right: 0;
    bottom: -3px;
    color: #fff;
    font: bold 13px/16px "DejaVu Sans Mono", monospace;
    text-shadow: 1px 0 #000, -1px 0 #000, 0 1px #000, 0 -1px #000, 1px 1px #000, -1px -1px #000;
}
```
